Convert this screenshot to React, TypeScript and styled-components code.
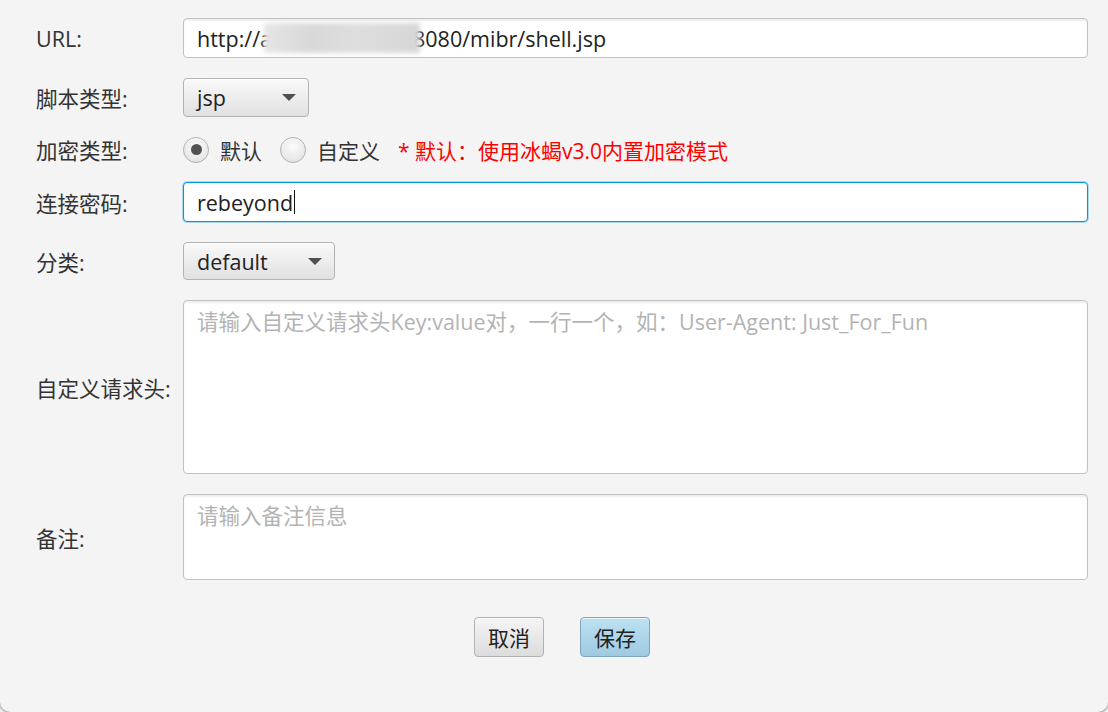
import React from "react";
import styled, { createGlobalStyle } from "styled-components";

const Global = createGlobalStyle`
  html, body { margin: 0; padding: 0; background: #f4f4f4; }
  body { font-family: "Open Sans", "Noto Sans CJK SC", sans-serif; }
  * { box-sizing: border-box; }
`;

const Window = styled.div`
  width: 1108px;
  height: 712px;
  background: #f4f4f4;
  border-radius: 0 0 10px 10px;
  box-shadow: 0 0 2px 1px rgba(0, 0, 0, 0.35);
  padding: 18px 20px 0 36px;
  overflow: hidden;
`;

const Form = styled.div`
  display: grid;
  grid-template-columns: 147px 1fr;
  grid-template-rows: 40px 39px 25px 40px 38px 174px 86px;
  row-gap: 20px;
  align-items: center;
`;

const Label = styled.div`
  font-size: 21.5px;
  color: #333;
  font-family: "Open Sans", "Noto Sans CJK SC", sans-serif;
  white-space: nowrap;
`;

const TextField = styled.div<{ $focused?: boolean }>`
  height: 100%;
  background: #fff;
  border: 1px solid ${(p) => (p.$focused ? "#0696d3" : "#c2c2c2")};
  border-radius: 4px;
  box-shadow: ${(p) =>
    p.$focused
      ? "0 0 0 1px #a9d9ef, inset 0 1px 2px rgba(0,0,0,0.08)"
      : "inset 0 2px 2px rgba(0,0,0,0.07)"};
  display: flex;
  align-items: center;
  padding: 0 13px;
  font-size: 21.5px;
  color: #222;
  white-space: nowrap;
  overflow: hidden;
`;

const Blur = styled.span`
  display: inline-block;
  width: 156px;
  height: 30px;
  margin: 0 -7px 0 -8px;
  background: linear-gradient(90deg, #e6e6e6, #d8d8d8 30%, #dedede 60%, #d6d6d6);
  filter: blur(2.5px);
  vertical-align: middle;
  position: relative;
  z-index: 1;
`;

const Caret = styled.span`
  display: inline-block;
  width: 1px;
  height: 24px;
  background: #111;
  vertical-align: middle;
  margin-left: 1px;
`;

const TextArea = styled.div`
  height: 100%;
  background: #fff;
  border: 1px solid #c2c2c2;
  border-radius: 4px;
  box-shadow: inset 0 2px 2px rgba(0,0,0,0.07);
  padding: 4px 13px;
  font-size: 21.5px;
  color: #b3b3b3;
  white-space: nowrap;
`;

const Combo = styled.div<{ $width: number }>`
  width: ${(p) => p.$width}px;
  height: 100%;
  border: 1px solid #b3b3b3;
  border-radius: 4px;
  background: linear-gradient(#f9f9f9, #e1e1e1);
  box-shadow: inset 0 1px 0 #fff;
  display: flex;
  align-items: center;
  justify-content: space-between;
  padding: 0 12px 0 13px;
  font-size: 21.5px;
  color: #222;
`;

const Arrow = styled.span`
  width: 0;
  height: 0;
  border-left: 7px solid transparent;
  border-right: 7px solid transparent;
  border-top: 7px solid #505050;
`;

const RadioRow = styled.div`
  display: flex;
  align-items: center;
  font-size: 21px;
  color: #333;
`;

const RadioItem = styled.label`
  display: flex;
  align-items: center;
  gap: 11px;
  margin-right: 18px;
`;

const RadioCircle = styled.span<{ $checked?: boolean }>`
  width: 26px;
  height: 26px;
  border-radius: 50%;
  border: 1px solid #b0b0b0;
  background: radial-gradient(circle at 50% 35%, #fbfbfb, #dedede);
  box-shadow: inset 0 1px 0 #fff;
  display: flex;
  align-items: center;
  justify-content: center;
  &::after {
    content: "";
    width: 11px;
    height: 11px;
    border-radius: 50%;
    background: #525252;
    display: ${(p) => (p.$checked ? "block" : "none")};
  }
`;

const Hint = styled.span`
  color: #ff0000;
  font-size: 21px;
`;

const Buttons = styled.div`
  grid-column: 1 / 3;
  display: flex;
  justify-content: center;
  gap: 36px;
  margin-top: 17px;
`;

const Button = styled.button<{ $primary?: boolean }>`
  width: 70px;
  height: 40px;
  border-radius: 4px;
  border: 1px solid ${(p) => (p.$primary ? "#7ea6bd" : "#b2b2b2")};
  background: ${(p) =>
    p.$primary
      ? "linear-gradient(#bde1f2, #9ecae1)"
      : "linear-gradient(#f5f5f5, #dcdcdc)"};
  box-shadow: inset 0 1px 0 rgba(255,255,255,0.7);
  font-family: "Noto Sans CJK SC", sans-serif;
  font-size: 21px;
  color: #222;
  padding: 0;
`;

export default function App() {
  return (
    <>
      <Global />
      <Window>
        <Form>
          <Label>URL:</Label>
          <TextField>
            http://a<Blur />8080/mibr/shell.jsp
          </TextField>

          <Label>脚本类型:</Label>
          <Combo $width={126}>
            jsp <Arrow />
          </Combo>

          <Label>加密类型:</Label>
          <RadioRow>
            <RadioItem>
              <RadioCircle $checked />
              默认
            </RadioItem>
            <RadioItem>
              <RadioCircle />
              自定义
            </RadioItem>
            <Hint>* 默认：使用冰蝎v3.0内置加密模式</Hint>
          </RadioRow>

          <Label>连接密码:</Label>
          <TextField $focused>
            rebeyond<Caret />
          </TextField>

          <Label>分类:</Label>
          <Combo $width={152}>
            default <Arrow />
          </Combo>

          <Label>自定义请求头:</Label>
          <TextArea>请输入自定义请求头Key:value对，一行一个，如：User-Agent: Just_For_Fun</TextArea>

          <Label>备注:</Label>
          <TextArea>请输入备注信息</TextArea>

          <Buttons>
            <Button>取消</Button>
            <Button $primary>保存</Button>
          </Buttons>
        </Form>
      </Window>
    </>
  );
}
